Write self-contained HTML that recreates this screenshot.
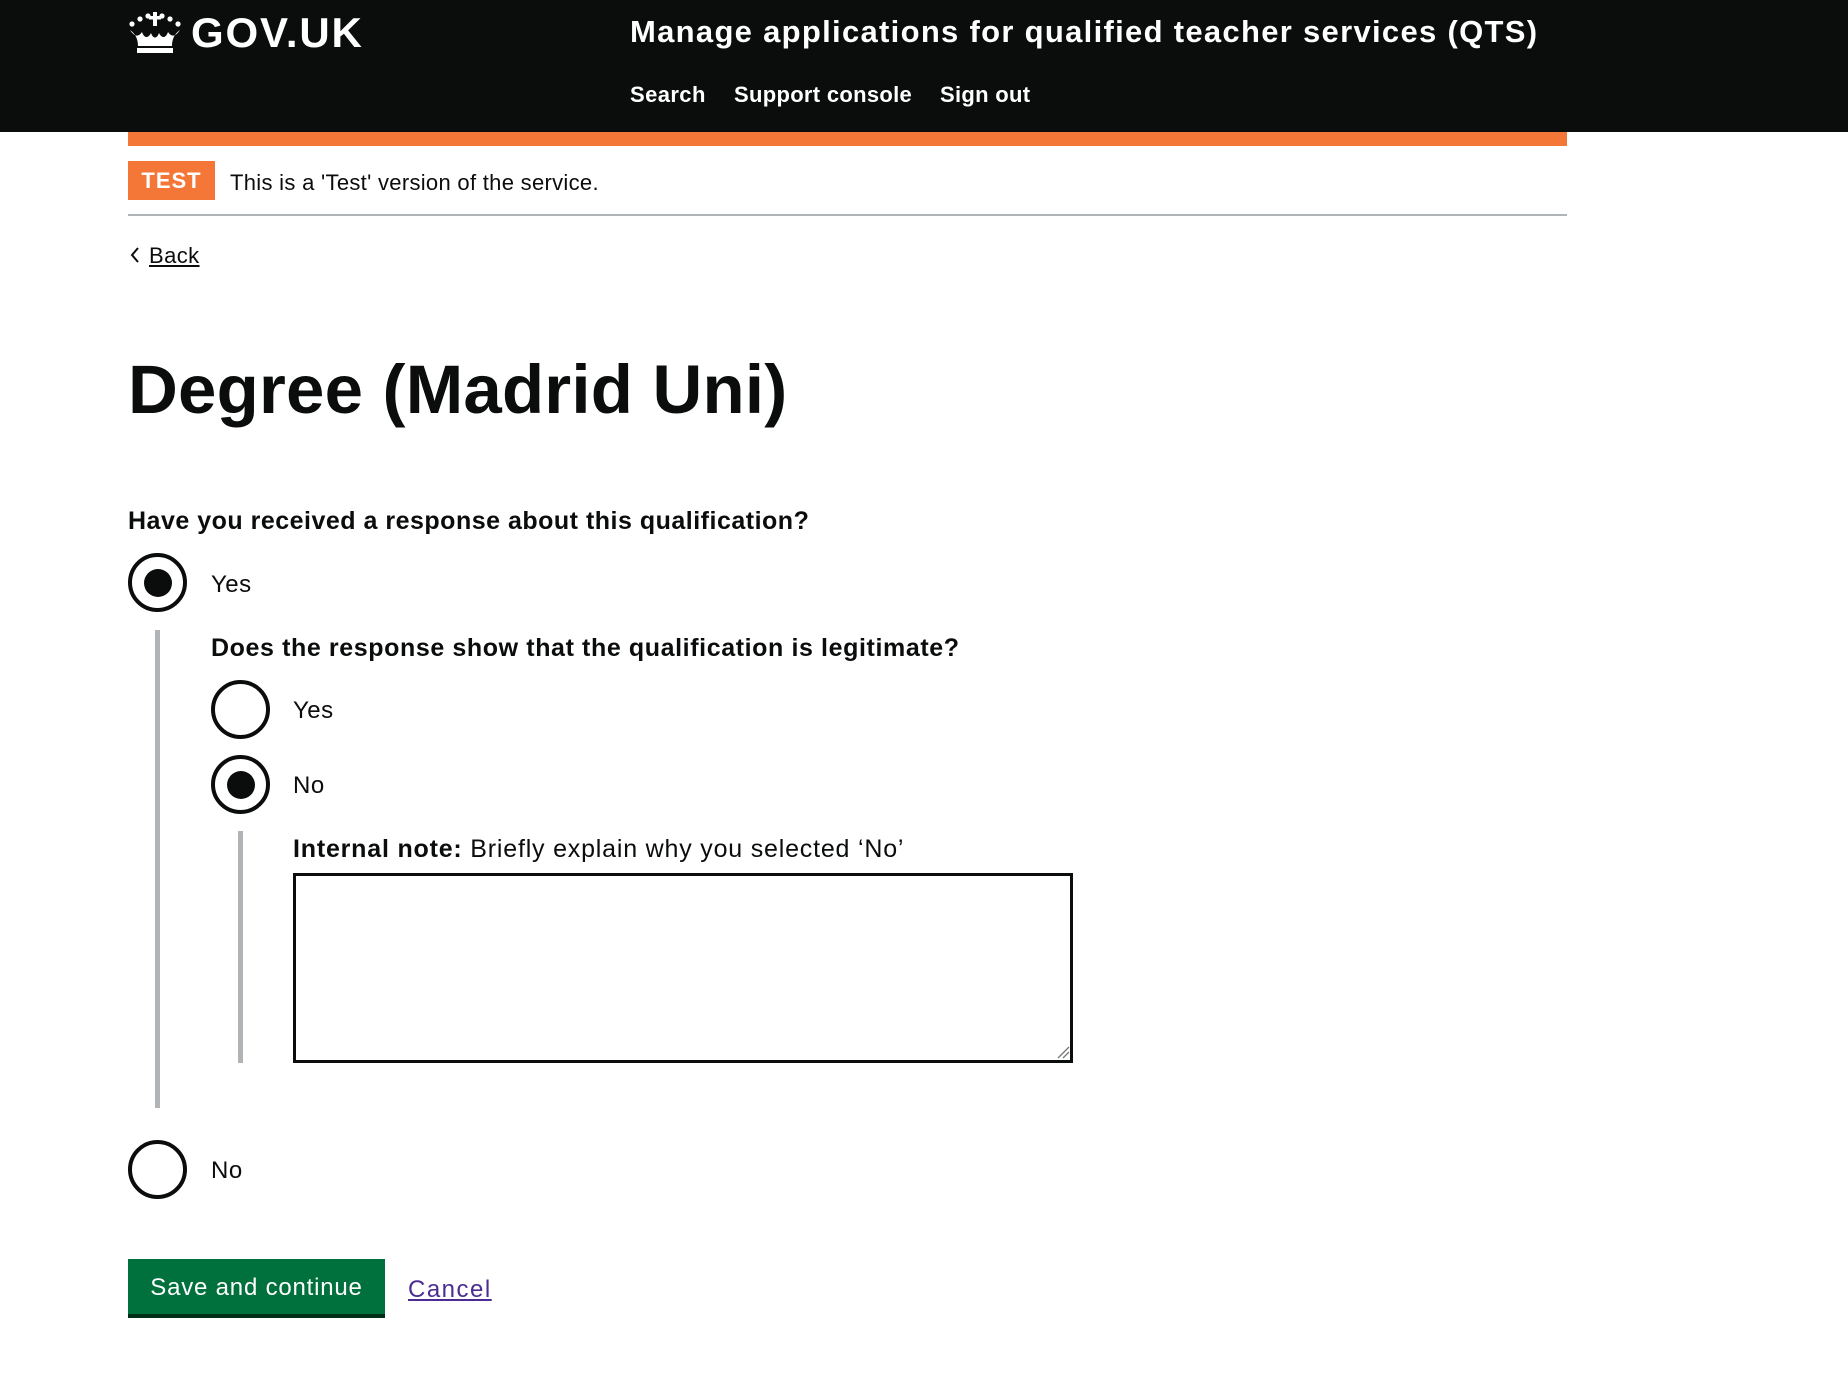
<!DOCTYPE html>
<html><head><meta charset="utf-8">
<style>
*{box-sizing:border-box;margin:0;padding:0}
body{width:1848px;height:1389px;background:#fff;font-family:"Liberation Sans",Arial,sans-serif;color:#0b0c0c;position:relative;overflow:hidden}
.abs{position:absolute;white-space:nowrap}
.hdr{position:absolute;left:0;top:0;width:1848px;height:132px;background:#0b0c0c}
.radio{position:absolute;width:59px;height:59px;border:4px solid #0b0c0c;border-radius:50%}
.radio.on::after{content:"";position:absolute;left:11.5px;top:11.5px;width:28px;height:28px;border-radius:50%;background:#0b0c0c}
.lbl{font-size:24px}
.bold{font-weight:bold}
</style></head><body>
<div class="hdr"></div>
<svg class="abs" style="left:128px;top:12px" width="54" height="42" viewBox="0 0 54 42" fill="#fff">
<circle cx="4" cy="12" r="2.6"/><circle cx="12" cy="7" r="2.6"/><circle cx="20" cy="4" r="2.6"/><circle cx="34" cy="4" r="2.6"/><circle cx="42" cy="7" r="2.6"/><circle cx="50" cy="12" r="2.6"/>
<rect x="25" y="0" width="4" height="14"/><rect x="21" y="4" width="12" height="3.5"/>
<path d="M2 18 C8 22 10 28 10 34 L44 34 C44 28 46 22 52 18 C48 24 44 26 40 20 C38 26 34 27 31 21 C29 27 25 27 23 21 C20 27 16 26 14 20 C10 26 6 24 2 18Z"/>
<rect x="9" y="36" width="36" height="5"/>
</svg>
<div class="abs" style="left:191px;top:9px;color:#fff;font-weight:bold;font-size:42px;letter-spacing:1.8px">GOV.UK</div>
<div class="abs" style="left:630px;top:14px;color:#fff;font-weight:bold;font-size:31px;letter-spacing:1.3px">Manage applications for qualified teacher services (QTS)</div>
<div class="abs" style="left:630px;top:82px;color:#fff;font-weight:bold;font-size:22px;letter-spacing:0.4px">Search</div>
<div class="abs" style="left:734px;top:82px;color:#fff;font-weight:bold;font-size:22px;letter-spacing:0.3px">Support console</div>
<div class="abs" style="left:940px;top:82px;color:#fff;font-weight:bold;font-size:22px;letter-spacing:0.3px">Sign out</div>
<div class="abs" style="left:128px;top:132px;width:1439px;height:14px;background:#f47738"></div>
<div class="abs" style="left:128px;top:161px;width:87px;height:39px;background:#f47738;color:#fff;font-weight:bold;font-size:22px;letter-spacing:1px;text-align:center;line-height:39px">TEST</div>
<div class="abs" style="left:230px;top:170px;font-size:22px;letter-spacing:0.3px">This is a 'Test' version of the service.</div>
<div class="abs" style="left:128px;top:214px;width:1439px;height:2px;background:#b1b4b6"></div>
<svg class="abs" style="left:129px;top:246px" width="12" height="18" viewBox="0 0 12 18"><path d="M9 2 L3 9 L9 16" fill="none" stroke="#0b0c0c" stroke-width="2"/></svg>
<div class="abs" style="left:149px;top:243px;font-size:22px;text-decoration:underline;letter-spacing:0.4px">Back</div>
<div class="abs" style="left:128px;top:350px;font-weight:bold;font-size:69px;letter-spacing:0.2px">Degree (Madrid Uni)</div>
<div class="abs bold" style="left:128px;top:507px;font-size:25px;letter-spacing:0.5px">Have you received a response about this qualification?</div>
<div class="radio on" style="left:128px;top:553px"></div>
<div class="abs lbl" style="left:211px;top:571px;letter-spacing:0.5px">Yes</div>
<div class="abs" style="left:155px;top:630px;width:5px;height:478px;background:#b1b4b6"></div>
<div class="abs bold" style="left:211px;top:634px;font-size:25px;letter-spacing:0.6px">Does the response show that the qualification is legitimate?</div>
<div class="radio" style="left:211px;top:680px"></div>
<div class="abs lbl" style="left:293px;top:697px;letter-spacing:0.5px">Yes</div>
<div class="radio on" style="left:211px;top:755px"></div>
<div class="abs lbl" style="left:293px;top:772px;letter-spacing:0.5px">No</div>
<div class="abs" style="left:238px;top:831px;width:5px;height:232px;background:#b1b4b6"></div>
<div class="abs lbl" style="left:293px;top:835px;font-size:25px;letter-spacing:0.8px"><b>Internal note:</b> Briefly explain why you selected ‘No’</div>
<div class="abs" style="left:293px;top:873px;width:780px;height:190px;border:3px solid #0b0c0c"></div>
<svg class="abs" style="left:1056px;top:1045px" width="14" height="14"><path d="M2 13 L13 2 M7 13 L13 7" stroke="#777" stroke-width="1.3"/></svg>
<div class="radio" style="left:128px;top:1140px"></div>
<div class="abs lbl" style="left:211px;top:1157px;letter-spacing:0.5px">No</div>
<div class="abs" style="left:128px;top:1259px;width:257px;height:59px;background:#00703c;border-bottom:4px solid #002d18;color:#fff;font-size:24px;text-align:center;line-height:58px;letter-spacing:0.8px">Save and continue</div>
<div class="abs" style="left:408px;top:1276px;font-size:24px;color:#4c2c92;text-decoration:underline;letter-spacing:1.5px">Cancel</div>
</body></html>
